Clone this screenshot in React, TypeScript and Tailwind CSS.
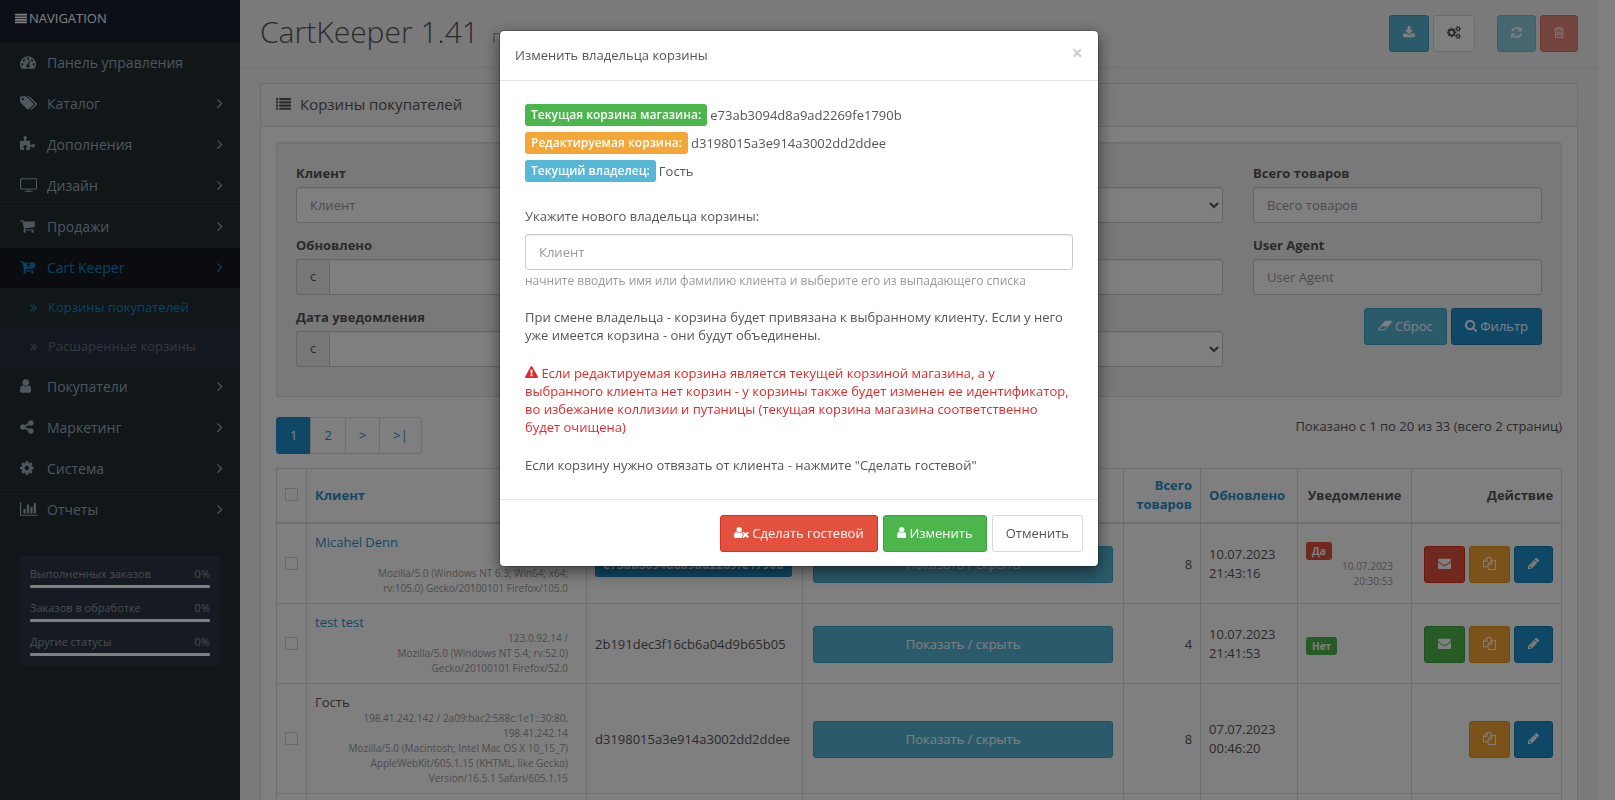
import React from "react";

type Glyph = { w: number; d: string };

const GEAR_SMALL =
  "v140q0 16-149 31-12 27-30 52 51 113 51 138 0 4-4 7-122 71-124 71-8 0-46-47t-52-68q-20 2-30 2t-30-2q-14 21-52 68t-46 47q-2 0-124-71-4-3-4-7 0-25 51-138-18-25-30-52-149-15-149-31v-140q0-16 149-31 13-29 30-52-51-113-51-138 0-4 4-7 4-2 35-20t59-34 30-16q8 0 46 46.5t52 67.5q20-2 30-2t30 2q51-71 92-112l6-2q4 0 124 70 4 3 4 7 0 25-51 138 17 23 30 52 149 15 149 31z";
const CART_BODY =
  "M640 1536q0 52-38 90t-90 38-90-38-38-90 38-90 90-38 90 38 38 90zm896 0q0 52-38 90t-90 38-90-38-38-90 38-90 90-38 90 38 38 90zm128-1088v512q0 24-16.5 42.5t-40.5 21.5l-1044 122q13 60 13 70 0 16-24 64h920q26 0 45 19t19 45-19 45-45 19h-1024q-26 0-45-19t-19-45q0-11 8-31.5t16-36 21.5-40 15.5-29.5l-177-823h-204q-26 0-45-19t-19-45 19-45 45-19h256q16 0 28.5 6.5t19.5 15.5 13 24.5 8 26 5.5 29.5 4.5 26h1201q26 0 45 19t19 45z";
const ROW_LINE = "v128q0 26-19 45t-45 19h-1664q-26 0-45-19t-19-45v-128q0-26 19-45t45-19h1664q26 0 45 19t19 45z";
const LIST_DOT = "v192q0 13-9.5 22.5t-22.5 9.5h-192q-13 0-22.5-9.5t-9.5-22.5v-192q0-13 9.5-22.5t22.5-9.5h192q13 0 22.5 9.5t9.5 22.5z";
const LIST_BAR = "v192q0 13-9.5 22.5t-22.5 9.5h-1344q-13 0-22.5-9.5t-9.5-22.5v-192q0-13 9.5-22.5t22.5-9.5h1344q13 0 22.5 9.5t9.5 22.5z";
const TRASH_SLOT = "v576q0 14-9 23t-23 9h-64q-14 0-23-9t-9-23v-576q0-14 9-23t23-9h64q14 0 23 9t9 23z";
const ANGLE =
  "q0 13-10 23l-466 466q-10 10-23 10t-23-10l-50-50q-10-10-10-23t10-23l393-393-393-393q-10-10-10-23t10-23l50-50q10-10 23-10t23 10l466 466q10 10 10 23z";

const glyphs = {
  justify: { w: 1792, d: `M1792 1344${ROW_LINE}M1792 960${ROW_LINE}M1792 576${ROW_LINE}M1792 192${ROW_LINE}` },
  list: {
    w: 1792,
    d: `M256 1312${LIST_DOT}M256 928${LIST_DOT}M256 544${LIST_DOT}M256 160${LIST_DOT}M1792 1312${LIST_BAR}M1792 928${LIST_BAR}M1792 544${LIST_BAR}M1792 160${LIST_BAR}`,
  },
  dashboard: {
    w: 1792,
    d: "M384 1152q0-53-37.5-90.5t-90.5-37.5-90.5 37.5-37.5 90.5 37.5 90.5 90.5 37.5 90.5-37.5 37.5-90.5zm192-448q0-53-37.5-90.5t-90.5-37.5-90.5 37.5-37.5 90.5 37.5 90.5 90.5 37.5 90.5-37.5 37.5-90.5zm428 481l101-382q6-26-7.5-48.5t-38.5-29.5-48 6.5-30 39.5l-101 382q-60 5-107 43.5t-63 98.5q-20 77 20 146t117 89 146-20 89-117q16-60-6-117t-72-91zm660-33q0-53-37.5-90.5t-90.5-37.5-90.5 37.5-37.5 90.5 37.5 90.5 90.5 37.5 90.5-37.5 37.5-90.5zm-640-640q0-53-37.5-90.5t-90.5-37.5-90.5 37.5-37.5 90.5 37.5 90.5 90.5 37.5 90.5-37.5 37.5-90.5zm448 192q0-53-37.5-90.5t-90.5-37.5-90.5 37.5-37.5 90.5 37.5 90.5 90.5 37.5 90.5-37.5 37.5-90.5zm320 448q0 261-141 483-19 29-54 29h-1402q-35 0-54-29-141-221-141-483 0-182 71-348t191-286 286-191 348-71 348 71 286 191 191 286 71 348z",
  },
  tags: {
    w: 1920,
    d: "M448 448q0-53-37.5-90.5t-90.5-37.5-90.5 37.5-37.5 90.5 37.5 90.5 90.5 37.5 90.5-37.5 37.5-90.5zm1067 576q0 53-37 90l-491 492q-39 37-91 37-53 0-90-37l-715-716q-38-37-64.5-101t-26.5-117v-416q0-52 38-90t90-38h416q53 0 117 26.5t102 64.5l715 714q37 39 37 91zm384 0q0 53-37 90l-491 492q-39 37-91 37-36 0-59-14t-53-45l470-470q37-37 37-90 0-52-37-91l-715-714q-38-38-102-64.5t-117-26.5h224q53 0 117 26.5t102 64.5l715 714q37 39 37 91z",
  },
  puzzle: {
    w: 1664,
    d: "M1664 1098q0 81-44.5 135t-123.5 54q-41 0-77.5-17.5t-59-38-56.5-38-71-17.5q-110 0-110 124 0 39 16 115t15 115v5q-22 0-33 1-34 3-97.5 11.5t-115.5 13.5-98 5q-61 0-103-26.5t-42-83.5q0-37 17.5-71t38-56.5 38-59 17.5-77.5q0-79-54-123.5t-135-44.5q-84 0-143 45.5t-59 127.5q0 43 15 83t33.5 64.5 33.5 53 15 50.5q0 45-46 89-37 35-117 35-95 0-245-24-9-2-27.5-4t-27.5-4l-13-2q-1 0-3-1-2 0-2-1v-1024q2 1 17.5 3.5t34 5 21.5 3.5q150 24 245 24 80 0 117-35 46-44 46-89 0-22-15-50.5t-33.5-53-33.5-64.5-15-83q0-82 59-127.5t144-45.5q80 0 134 44.5t54 123.5q0 41-17.5 77.5t-38 59-38 56.5-17.5 71q0 57 42 83.5t103 26.5q64 0 180-15t163-17v2q-1 2-3.5 17.5t-5 34-3.5 21.5q-24 150-24 245 0 80 35 117 44 46 89 46 22 0 50.5-15t53-33.5 64.5-33.5 83-15q82 0 127.5 59t45.5 143z",
  },
  tv: {
    w: 1920,
    d: "M1792 1248v-960q0-13-9.5-22.5t-22.5-9.5h-1600q-13 0-22.5 9.5t-9.5 22.5v960q0 13 9.5 22.5t22.5 9.5h1600q13 0 22.5-9.5t9.5-22.5zm128-960v960q0 66-47 113t-113 47h-736v128h352q14 0 23 9t9 23v64q0 14-9 23t-23 9h-832q-14 0-23-9t-9-23v-64q0-14 9-23t23-9h352v-128h-736q-66 0-113-47t-47-113v-960q0-66 47-113t113-47h1600q66 0 113 47t47 113z",
  },
  cart: { w: 1664, d: CART_BODY },
  cartPlus: {
    w: 1664,
    d:
      "M1216 640q0-26-19-45t-45-19h-128v-128q0-26-19-45t-45-19-45 19-19 45v128h-128q-26 0-45 19t-19 45 19 45 45 19h128v128q0 26 19 45t45 19 45-19 19-45v-128h128q26 0 45-19t19-45z" +
      CART_BODY,
  },
  user: {
    w: 1280,
    d: "M1280 1399q0 109-62.5 187t-150.5 78h-854q-88 0-150.5-78t-62.5-187q0-85 8.5-160.5t31.5-152 58.5-131 94-89 134.5-34.5q131 128 313 128t313-128q76 0 134.5 34.5t94 89 58.5 131 31.5 152 8.5 160.5zm-256-887q0 159-112.5 271.5t-271.5 112.5-271.5-112.5-112.5-271.5 112.5-271.5 271.5-112.5 271.5 112.5 112.5 271.5z",
  },
  share: {
    w: 1536,
    d: "M1216 1024q133 0 226.5 93.5t93.5 226.5-93.5 226.5-226.5 93.5-226.5-93.5-93.5-226.5q0-12 2-34l-360-180q-92 86-218 86-133 0-226.5-93.5t-93.5-226.5 93.5-226.5 226.5-93.5q126 0 218 86l360-180q-2-22-2-34 0-133 93.5-226.5t226.5-93.5 226.5 93.5 93.5 226.5-93.5 226.5-226.5 93.5q-126 0-218-86l-360 180q2 22 2 34t-2 34l360 180q92-86 218-86z",
  },
  cog: {
    w: 1536,
    d: "M1024 896q0-106-75-181t-181-75-181 75-75 181 75 181 181 75 181-75 75-181zm512-109v222q0 12-8 23t-20 13l-185 28q-19 54-39 91 35 50 107 138 10 12 10 25t-9 23q-27 37-99 108t-94 71q-12 0-26-9l-138-108q-44 23-91 38-16 136-29 186-7 28-36 28h-222q-14 0-24.5-8.5t-11.5-21.5l-28-184q-49-16-90-37l-141 107q-10 9-25 9-14 0-25-11-126-114-165-168-7-10-7-23 0-12 8-23 15-21 51-66.5t54-70.5q-27-50-41-99l-183-27q-13-2-21-12.5t-8-23.5v-222q0-12 8-23t19-13l186-28q14-46 39-92-40-57-107-138-10-12-10-24 0-10 9-23 26-36 98.5-107.5t94.5-71.5q13 0 26 10l138 107q44-23 91-38 16-136 29-186 7-28 36-28h222q14 0 24.5 8.5t11.5 21.5l28 184q49 16 90 37l142-107q9-9 24-9 13 0 25 10 129 119 165 170 7 8 7 22 0 12-8 23-15 21-51 66.5t-54 70.5q26 50 41 98l183 28q13 2 21 12.5t8 23.5z",
  },
  cogs: {
    w: 1920,
    d:
      "M896 896q0-106-75-181t-181-75-181 75-75 181 75 181 181 75 181-75 75-181zm768 512q0-52-38-90t-90-38-90 38-38 90q0 53 37.5 90.5t90.5 37.5 90.5-37.5 37.5-90.5zm0-1024q0-52-38-90t-90-38-90 38-38 90q0 53 37.5 90.5t90.5 37.5 90.5-37.5 37.5-90.5zm-384 421v185q0 10-7 19.5t-16 10.5l-155 24q-11 35-32 76 34 48 90 115 7 11 7 20 0 12-7 19-23 30-82.5 89.5t-78.5 59.5q-11 0-21-7l-115-90q-37 19-77 31-11 108-23 155-7 24-30 24h-186q-11 0-20-7.5t-10-17.5l-23-153q-34-10-75-31l-118 89q-7 7-20 7-11 0-21-8-144-133-144-160 0-9 7-19 10-14 41-53t47-61q-23-44-35-82l-152-24q-10-1-17-9.5t-7-19.5v-185q0-10 7-19.5t16-10.5l155-24q11-35 32-76-34-48-90-115-7-11-7-20 0-12 7-20 22-30 82-89t79-59q11 0 21 7l115 90q34-18 77-32 11-108 23-154 7-24 30-24h186q11 0 20 7.5t10 17.5l23 153q34 10 75 31l118-89q8-7 20-7 11 0 21 8 144 133 144 160 0 8-7 19-12 16-42 54t-45 60q23 48 34 82l152 23q10 2 17 10.5t7 19.5z" +
      "M1920 1338" + GEAR_SMALL + "M1920 314" + GEAR_SMALL,
  },
  chart: {
    w: 2048,
    d: "M640 896v512h-256v-512h256zm384-512v1024h-256v-1024h256zm1024 1152v128h-2048v-1536h128v1408h1920zm-640-896v768h-256v-768h256zm384-384v1152h-256v-1152h256z",
  },
  angle: { w: 640, d: `M595 960${ANGLE}` },
  angles: { w: 1024, d: `M595 960${ANGLE}M979 960${ANGLE}` },
  download: {
    w: 1664,
    d: "M1280 1344q0-26-19-45t-45-19-45 19-19 45 19 45 45 19 45-19 19-45zm256 0q0-26-19-45t-45-19-45 19-19 45 19 45 45 19 45-19 19-45zm128-224v320q0 40-28 68t-68 28h-1472q-40 0-68-28t-28-68v-320q0-40 28-68t68-28h465l135 136q58 56 136 56t136-56l136-136h464q40 0 68 28t28 68zm-325-569q17 41-14 70l-448 448q-18 19-45 19t-45-19l-448-448q-31-29-14-70 17-39 59-39h256v-448q0-26 19-45t45-19h256q26 0 45 19t19 45v448h256q42 0 59 39z",
  },
  refresh: {
    w: 1536,
    d: "M1511 1056q0 5-1 7-64 268-268 434.5t-478 166.5q-146 0-282.5-55t-243.5-157l-129 129q-19 19-45 19t-45-19-19-45v-448q0-26 19-45t45-19h448q26 0 45 19t19 45-19 45l-137 137q71 66 161 102t187 36q134 0 250-65t186-179q11-17 53-117 8-23 30-23h192q13 0 22.5 9.5t9.5 22.5zm25-800v448q0 26-19 45t-45 19h-448q-26 0-45-19t-19-45 19-45l138-138q-148-137-349-137-134 0-250 65t-186 179q-11 17-53 117-8 23-30 23h-199q-13 0-22.5-9.5t-9.5-22.5v-7q65-268 270-434.5t480-166.5q146 0 284 55.5t245 156.5l130-129q19-19 45-19t45 19 19 45z",
  },
  trash: {
    w: 1408,
    d: `M512 736${TRASH_SLOT}M768 736${TRASH_SLOT}M1024 736${TRASH_SLOT}M1152 1460v-948h-896v948q0 22 7 40.5t14.5 27 10.5 8.5h832q3 0 10.5-8.5t14.5-27 7-40.5zm-672-1076h448l-48-117q-7-9-17-11h-317q-10 2-17 11zm928 32v64q0 14-9 23t-23 9h-96v948q0 83-47 143.5t-113 60.5h-832q-66 0-113-58.5t-47-141.5v-952h-96q-14 0-23-9t-9-23v-64q0-14 9-23t23-9h309l70-167q15-37 54-63t79-26h320q40 0 79 26t54 63l70 167h309q14 0 23 9t9 23z`,
  },
  eraser: {
    w: 1920,
    d: "M896 1408l336-384h-768l-336 384h768zm1013-1077q15 34 9.5 71.5t-30.5 65.5l-896 1024q-38 44-96 44h-768q-38 0-69.5-20.5t-47.5-54.5q-15-34-9.5-71.5t30.5-65.5l896-1024q38-44 96-44h768q38 0 69.5 20.5t47.5 54.5z",
  },
  search: {
    w: 1664,
    d: "M1152 832q0-185-131.5-316.5t-316.5-131.5-316.5 131.5-131.5 316.5 131.5 316.5 316.5 131.5 316.5-131.5 131.5-316.5zm512 832q0 52-38 90t-90 38q-54 0-90-38l-343-342q-179 124-399 124-143 0-273.5-55.5t-225-150-150-225-55.5-273.5 55.5-273.5 150-225 225-150 273.5-55.5 273.5 55.5 225 150 150 225 55.5 273.5q0 220-124 399l343 343q37 37 37 90z",
  },
  mail: {
    w: 1792,
    d: "M1792 710v794q0 66-47 113t-113 47h-1472q-66 0-113-47t-47-113v-794q44 49 101 87 362 246 497 345 57 42 92.5 65.5t94.5 48 110 24.5h2q51 0 110-24.5t94.5-48 92.5-65.5q170-123 498-345 57-39 100-87zm0-294q0 79-49 151t-122 123q-376 261-468 325-10 7-42.5 30.5t-54 38-52 32.5-57.5 27-50 9h-2q-23 0-50-9t-57.5-27-52-32.5-54-38-42.5-30.5q-91-64-262-182.5t-205-142.5q-62-42-117-115.5t-55-136.5q0-78 41.5-130t118.5-52h1472q65 0 112.5 47t47.5 113z",
  },
  copy: {
    w: 1792,
    d: "M1696 384q40 0 68 28t28 68v1216q0 40-28 68t-68 28h-960q-40 0-68-28t-28-68v-288h-544q-40 0-68-28t-28-68v-672q0-40 20-88t48-76l408-408q28-28 76-48t88-20h416q40 0 68 28t28 68v328q68-40 128-40h416zm-544 213l-299 299h299v-299zm-640-384l-299 299h299v-299zm196 647l316-316v-416h-384v416q0 40-28 68t-68 28h-416v640h512v-256q0-40 20-88t48-76zm956 804v-1152h-384v416q0 40-28 68t-68 28h-416v640h896z",
  },
  pencil: {
    w: 1536,
    d: "M363 1536l91-91-235-235-91 91v107h128v128h107zm523-928q0-22-22-22-10 0-17 7l-542 542q-7 7-7 17 0 22 22 22 10 0 17-7l542-542q7-7 7-17zm-54-192l416 416-832 832h-416v-416zm683 96q0 53-37 90l-166 166-416-416 166-165q36-38 90-38 53 0 91 38l235 234q37 39 37 91z",
  },
  userTimes: {
    w: 2048,
    d: "M704 896q-159 0-271.5-112.5t-112.5-271.5 112.5-271.5 271.5-112.5 271.5 112.5 112.5 271.5-112.5 271.5-271.5 112.5zm1077 320l249 249q9 9 9 23 0 13-9 22l-136 136q-9 9-22 9-14 0-23-9l-249-249-249 249q-9 9-23 9-13 0-22-9l-136-136q-9-9-9-22 0-14 9-23l249-249-249-249q-9-9-9-23 0-13 9-22l136-136q9-9 22-9 14 0 23 9l249 249 249-249q9-9 23-9 13 0 22 9l136 136q9 9 9 22 0 14-9 23zm-498 0l-181 181q-37 37-37 91 0 53 37 90l83 83q-21 3-44 3h-874q-121 0-194-69t-73-190q0-53 3.5-103.5t14-109 26.5-108.5 43-97.5 62-81 85.5-53.5 111.5-20q19 0 39 17 154 122 319 122t319-122q20-17 39-17 28 0 57 6-28 27-41 50t-13 56q0 54 37 91z",
  },
  warning: {
    w: 1792,
    d: "M1024 1375v-190q0-14-9.5-23.5t-22.5-9.5h-192q-13 0-22.5 9.5t-9.5 23.5v190q0 14 9.5 23.5t22.5 9.5h192q13 0 22.5-9.5t9.5-23.5zm-2-374l18-459q0-12-10-19-13-11-24-11h-220q-11 0-24 11-10 7-10 21l17 457q0 10 10 16.5t24 6.5h185q14 0 23.5-6.5t10.5-16.5zm-14-934l768 1408q35 63-2 126-17 29-46.5 46t-63.5 17h-1536q-34 0-63.5-17t-46.5-46q-37-63-2-126l768-1408q17-31 47-49t65-18 65 18 47 49z",
  },
} satisfies Record<string, Glyph>;

type IconName = keyof typeof glyphs;

function Icon({ name, className = "" }: { name: IconName; className?: string }) {
  const g = glyphs[name];
  return (
    <svg
      aria-hidden="true"
      viewBox={`0 0 ${g.w} 1792`}
      style={{ width: `${g.w / 1792}em` }}
      className={`inline-block h-[1em] shrink-0 fill-current align-[-1px] ${className}`}
    >
      <path fillRule="evenodd" d={g.d} />
    </svg>
  );
}

const tones = {
  primary: "bg-[#1e91cf] border-[#197bb0] text-white",
  info: "bg-[#56b7d6] border-[#35a5c7] text-white",
  success: "bg-[#4cb64c] border-[#3da23d] text-white",
  warning: "bg-[#f4a737] border-[#e8940f] text-white",
  danger: "bg-[#e3503e] border-[#dd2f1a] text-white",
  plain: "bg-white border-[#d9d9d9] text-[#555]",
};
type Tone = keyof typeof tones;

function Button({
  tone,
  className = "",
  children,
  ...rest
}: { tone: Tone } & React.ButtonHTMLAttributes<HTMLButtonElement>) {
  return (
    <button
      type="button"
      className={`rounded-[3px] border px-[13px] py-2 text-[13px] leading-[19px] whitespace-nowrap ${tones[tone]} ${className}`}
      {...rest}
    >
      {children}
    </button>
  );
}

const menu: { icon: IconName; text: string; leaf?: boolean; open?: boolean }[] = [
  { icon: "dashboard", text: "Панель управления", leaf: true },
  { icon: "tags", text: "Каталог" },
  { icon: "puzzle", text: "Дополнения" },
  { icon: "tv", text: "Дизайн" },
  { icon: "cart", text: "Продажи" },
  { icon: "cartPlus", text: "Cart Keeper", open: true },
  { icon: "user", text: "Покупатели" },
  { icon: "share", text: "Маркетинг" },
  { icon: "cog", text: "Система" },
  { icon: "chart", text: "Отчеты" },
];

function Sidebar() {
  return (
    <nav className="w-60 shrink-0 bg-[#222d33]">
      <div className="flex h-[43px] items-start bg-[#191e2c] px-[15px] pt-[9px] text-[13px] leading-[19px] text-white">
        <span className="flex items-center gap-[2px]">
          <Icon name="justify" className="text-[12px]" />
          NAVIGATION
        </span>
      </div>
      <ul>
        {menu.map((m) => (
          <li key={m.text}>
            <a
              href="#"
              className={`flex h-[41px] items-center border-b border-[#283338] pr-[17px] pb-[2px] pl-5 text-[14px] ${
                m.open ? "bg-[#161820] text-[#0f86c4]" : "text-[#9baebc]"
              }`}
            >
              <span className="flex w-[27px]">
                <Icon name={m.icon} className="text-[16px]" />
              </span>
              <span className="grow">{m.text}</span>
              {!m.leaf && <Icon name="angle" className="text-[16px]" />}
            </a>
            {m.open && (
              <ul className="text-[13px]">
                <li>
                  <a href="#" className="flex h-[39px] items-center pb-[2px] pl-[30px] text-[#0f86c4]">
                    <span className="flex w-[18px]">
                      <Icon name="angles" className="text-[13px]" />
                    </span>
                    Корзины покупателей
                  </a>
                </li>
                <li>
                  <a href="#" className="flex h-[39px] items-center bg-[#262e40] pb-[2px] pl-[30px] text-[#6a6f7c]">
                    <span className="flex w-[18px]">
                      <Icon name="angles" className="text-[13px]" />
                    </span>
                    Расшаренные корзины
                  </a>
                </li>
              </ul>
            )}
          </li>
        ))}
      </ul>
      <div className="mx-5 mt-[25px] flex flex-col gap-3 rounded-[2px] bg-[#2a3546] px-[10px] pt-[9px] pb-[11px] text-[11px] leading-[17px] text-[#999]">
        {["Выполненных заказов", "Заказов в обработке", "Другие статусы"].map((s) => (
          <div key={s}>
            <div className="flex justify-between">
              <span>{s}</span>
              <span>0%</span>
            </div>
            <div className="mt-[3px] -mb-px h-[3px] rounded-[1px] bg-white" />
          </div>
        ))}
      </div>
    </nav>
  );
}

const box =
  "h-9 w-full min-w-0 rounded-[3px] border border-[#ccc] bg-white px-[13px] text-[13px] text-[#555] placeholder:text-[#999] shadow-[inset_0_1px_1px_rgba(0,0,0,0.075)]";

function Field({ id, label, children }: { id: string; label: string; children: React.ReactNode }) {
  return (
    <div>
      <label htmlFor={id} className="mb-[4px] block leading-[19px] font-bold text-[#555]">
        {label}
      </label>
      {children}
    </div>
  );
}

function DateInput({ id, prefix }: { id: string; prefix: string }) {
  return (
    <div className="flex">
      <span className="flex h-9 items-center rounded-l-[3px] border border-r-0 border-[#ccc] bg-[#eee] px-[13px] text-[#555]">
        {prefix}
      </span>
      <input id={id} className={`${box} rounded-l-none`} />
    </div>
  );
}

function Filters() {
  return (
    <form className="grid grid-cols-4 gap-x-[30px] rounded-[3px] border border-[#dedede] bg-[#f3f3f3] px-[19px] pt-[21px] pb-[29px] shadow-[inset_0_1px_1px_rgba(0,0,0,0.05)]">
      <div className="flex flex-col gap-[13px]">
        <Field id="client" label="Клиент">
          <input id="client" placeholder="Клиент" className={box} />
        </Field>
        <Field id="updated-from" label="Обновлено">
          <DateInput id="updated-from" prefix="с" />
        </Field>
        <Field id="notified-from" label="Дата уведомления">
          <DateInput id="notified-from" prefix="с" />
        </Field>
      </div>
      <div className="flex flex-col gap-[13px]">
        <Field id="cart" label="Корзина">
          <input id="cart" placeholder="Корзина" className={box} />
        </Field>
        <Field id="updated-to" label="Обновлено">
          <DateInput id="updated-to" prefix="по" />
        </Field>
        <Field id="notified-to" label="Дата уведомления">
          <DateInput id="notified-to" prefix="по" />
        </Field>
      </div>
      <div className="flex flex-col gap-[13px]">
        <Field id="kind" label="Тип">
          <select id="kind" className={box} />
        </Field>
        <Field id="ip" label="IP">
          <input id="ip" placeholder="IP" className={box} />
        </Field>
        <Field id="notice" label="Уведомление">
          <select id="notice" className={box} />
        </Field>
      </div>
      <div className="flex flex-col gap-[13px]">
        <Field id="total" label="Всего товаров">
          <input id="total" placeholder="Всего товаров" className={box} />
        </Field>
        <Field id="agent" label="User Agent">
          <input id="agent" placeholder="User Agent" className={box} />
        </Field>
        <div className="flex justify-end gap-1">
          <Button tone="info">
            <Icon name="eraser" /> Сброс
          </Button>
          <Button tone="primary">
            <Icon name="search" /> Фильтр
          </Button>
        </div>
      </div>
    </form>
  );
}

type Row = {
  name: string;
  guest?: boolean;
  agent: string[];
  cart: string;
  current?: boolean;
  total: number;
  date: string[];
  notice?: { text: string; tone: Tone; when?: string[] };
  mail?: Tone;
};

const rows: Row[] = [
  {
    name: "Micahel Denn",
    agent: ["\u00a0", "Mozilla/5.0 (Windows NT 6.3; Win64; x64;", "rv:105.0) Gecko/20100101 Firefox/105.0"],
    cart: "e73ab3094d8a9ad2269fe1790b",
    current: true,
    total: 8,
    date: ["10.07.2023", "21:43:16"],
    notice: { text: "Да", tone: "danger", when: ["10.07.2023", "20:30:53"] },
    mail: "danger",
  },
  {
    name: "test test",
    agent: ["123.0.92.14 /", "Mozilla/5.0 (Windows NT 5.4; rv:52.0)", "Gecko/20100101 Firefox/52.0"],
    cart: "2b191dec3f16cb6a04d9b65b05",
    total: 4,
    date: ["10.07.2023", "21:41:53"],
    notice: { text: "Нет", tone: "success" },
    mail: "success",
  },
  {
    name: "Гость",
    guest: true,
    agent: [
      "198.41.242.142 / 2a09:bac2:588c:1e1::30:80,",
      "198.41.242.14",
      "Mozilla/5.0 (Macintosh; Intel Mac OS X 10_15_7)",
      "AppleWebKit/605.1.15 (KHTML, like Gecko)",
      "Version/16.5.1 Safari/605.1.15",
    ],
    cart: "d3198015a3e914a3002dd2ddee",
    total: 8,
    date: ["07.07.2023", "00:46:20"],
  },
];

function Tick({ label }: { label: string }) {
  return (
    <input
      type="checkbox"
      aria-label={label}
      className="mb-[2px] block size-[13px] appearance-none border border-[#d4d4d4]"
    />
  );
}

function Lines({ items }: { items: string[] }) {
  return (
    <>
      {items.map((t, i) => (
        <span key={i} className="block whitespace-nowrap">
          {t}
        </span>
      ))}
    </>
  );
}

const cell = "border border-[#ddd] align-middle";
const td = `${cell} px-2 pt-[9px] pb-[7px]`;
const th = `${cell} border-b-2 px-2 pt-[7px] pb-2 leading-[19px] font-bold`;

function CartTable() {
  return (
    <table className="w-full table-fixed border-collapse text-[13px]">
      <colgroup>
        <col className="w-[30px]" />
        <col className="w-[280px]" />
        <col className="w-[216px]" />
        <col />
        <col className="w-[77px]" />
        <col className="w-[97px]" />
        <col className="w-[114px]" />
        <col className="w-[150px]" />
      </colgroup>
      <thead>
        <tr>
          <th className={th}>
            <Tick label="Выбрать все" />
          </th>
          <th className={`${th} text-left`}>
            <a href="#" className="text-[#1e91cf]">Клиент</a>
          </th>
          <th className={`${th} text-left`}>
            <a href="#" className="text-[#1e91cf]">Корзина</a>
          </th>
          <th className={`${th} text-center`}>Товары</th>
          <th className={`${th} text-right`}>
            <a href="#" className="text-[#1e91cf]">Всего товаров</a>
          </th>
          <th className={`${th} text-left`}>
            <a href="#" className="text-[#1e91cf]">Обновлено</a>
          </th>
          <th className={`${th} text-center`}>Уведомление</th>
          <th className={`${th} text-right`}>Действие</th>
        </tr>
      </thead>
      <tbody>
        {rows.map((r) => (
          <tr key={r.cart}>
            <td className={td}>
              <Tick label={r.name} />
            </td>
            <td className={td}>
              <div className="leading-[18px]">{r.guest ? r.name : <a href="#" className="text-[#1e91cf]">{r.name}</a>}</div>
              <div className="pr-[10px] text-right text-[10px] leading-[15px] text-[#999]">
                <Lines items={r.agent} />
              </div>
            </td>
            <td className={td}>
              {r.current ? (
                <span className="inline-block rounded-[3px] bg-[#1e91cf] px-2 text-[12px] leading-[24px] font-bold text-white">
                  {r.cart}
                </span>
              ) : (
                r.cart
              )}
            </td>
            <td className={`${cell} px-[10px] pt-[9px] pb-[7px]`}>
              <Button tone="info" className="block w-full">
                Показать / скрыть
              </Button>
            </td>
            <td className={`${td} text-right`}>{r.total}</td>
            <td className={`${cell} px-2 py-2 leading-[19px]`}>
              <Lines items={r.date} />
            </td>
            <td className={`${cell} px-2 py-2`}>
              {r.notice && (
                <span
                  className={`mt-1 block w-fit rounded-[3px] px-[6px] text-[10px] leading-[18px] font-bold ${tones[r.notice.tone]}`}
                >
                  {r.notice.text}
                </span>
              )}
              {r.notice?.when && (
                <div className="-mt-px pr-[10px] text-right text-[10px] leading-[15px] text-[#999]">
                  <Lines items={r.notice.when} />
                </div>
              )}
            </td>
            <td className={td}>
              <div className="flex justify-end gap-1">
                {r.mail && (
                  <Button tone={r.mail} aria-label="Уведомить">
                    <Icon name="mail" />
                  </Button>
                )}
                <Button tone="warning" aria-label="Копировать">
                  <Icon name="copy" />
                </Button>
                <Button tone="primary" aria-label="Редактировать">
                  <Icon name="pencil" />
                </Button>
              </div>
            </td>
          </tr>
        ))}
        <tr>
          {Array.from({ length: 8 }, (_, i) => (
            <td key={i} className={`${td} h-20`} />
          ))}
        </tr>
      </tbody>
    </table>
  );
}

function Pager() {
  const item = "-ml-px border border-[#ddd] bg-white px-[13px] py-2 leading-[19px] text-[#1e91cf]";
  return (
    <div className="flex items-start justify-between">
      <div className="flex pl-px">
        <a href="#" className="-ml-px rounded-l-[3px] border border-[#1e91cf] bg-[#1e91cf] px-[13px] py-2 leading-[19px] text-white">
          1
        </a>
        <a href="#" className={item}>2</a>
        <a href="#" className={item}>&gt;</a>
        <a href="#" className={`${item} rounded-r-[3px]`}>&gt;|</a>
      </div>
      <span className="leading-[19px]">Показано с 1 по 20 из 33 (всего 2 страниц)</span>
    </div>
  );
}

function Info({ tone, label, value }: { tone: Tone; label: string; value: string }) {
  return (
    <div className="flex items-center gap-[3px]">
      <span className={`rounded-[3px] px-[6px] text-[12px] leading-[22px] font-semibold ${tones[tone]}`}>{label}</span>
      <span>{value}</span>
    </div>
  );
}

function OwnerDialog() {
  return (
    <div
      role="dialog"
      aria-labelledby="dialog-title"
      className="w-[600px] self-start rounded-[5px] border border-black/20 bg-white bg-clip-padding text-[13px] leading-[18px] text-[#555] shadow-[0_5px_15px_rgba(0,0,0,0.5)]"
    >
      <div className="flex items-start justify-between border-b border-[#e5e5e5] p-[15px]">
        <h4 id="dialog-title" className="leading-[19px]">
          Изменить владельца корзины
        </h4>
        <button type="button" aria-label="Закрыть" className="text-[20px] leading-[14px] font-bold text-[#ccc]">
          ×
        </button>
      </div>
      <div className="px-[25px] pt-[23px] pb-[25px]">
        <div className="flex flex-col gap-[6px]">
          <Info tone="success" label="Текущая корзина магазина:" value="e73ab3094d8a9ad2269fe1790b" />
          <Info tone="warning" label="Редактируемая корзина:" value="d3198015a3e914a3002dd2ddee" />
          <Info tone="info" label="Текущий владелец:" value="Гость" />
        </div>
        <label htmlFor="owner" className="mt-[25px] mb-[9px] block">
          Укажите нового владельца корзины:
        </label>
        <input id="owner" placeholder="Клиент" className={box} />
        <p className="mt-[2px] text-[12px] text-[#999]">
          начните вводить имя или фамилию клиента и выберите его из выпадающего списка
        </p>
        <p className="mt-[18px]">
          При смене владельца - корзина будет привязана к выбранному клиенту. Если у него уже имеется корзина - они
          будут объединены.
        </p>
        <p className="mt-5 text-[#e12a2a]">
          <Icon name="warning" /> Если редактируемая корзина является текущей корзиной магазина, а у выбранного клиента
          нет корзин - у корзины также будет изменен ее идентификатор, во избежание коллизии и путаницы (текущая
          корзина магазина соответственно будет очищена)
        </p>
        <p className="mt-5">Если корзину нужно отвязать от клиента - нажмите "Сделать гостевой"</p>
      </div>
      <div className="flex justify-end gap-[5px] border-t border-[#e5e5e5] px-[15px] pt-[15px] pb-[14px]">
        <Button tone="danger">
          <Icon name="userTimes" /> Сделать гостевой
        </Button>
        <Button tone="success">
          <Icon name="user" /> Изменить
        </Button>
        <Button tone="plain">Отменить</Button>
      </div>
    </div>
  );
}

export default function App() {
  return (
    <div className="flex h-screen overflow-hidden bg-white pr-[17px] font-['Open_Sans','Noto_Sans',sans-serif] text-[13px] text-[#555]">
      <Sidebar />
      <main className="min-w-0 grow bg-[#f5f5f5]">
        <header className="flex h-[68px] items-start justify-between border-b border-[#e5e5e5] px-5 pt-[15px]">
          <div className="flex items-start gap-[13px]">
            <h1 className="text-[30px] leading-[34px] font-light">CartKeeper 1.41</h1>
            <a href="#" className="flex items-center gap-[2px] pt-[13px] text-[14px] leading-[20px] text-[#999]">
              Поддержка
              <span className="size-[12px] rounded-full border-2 border-[#35a5c7]" />
            </a>
          </div>
          <div className="flex gap-1">
            <Button tone="info" aria-label="Скачать">
              <Icon name="download" />
            </Button>
            <Button tone="plain" aria-label="Настройки">
              <Icon name="cogs" />
            </Button>
            <Button tone="info" disabled aria-label="Обновить" className="ml-[18px] opacity-65">
              <Icon name="refresh" />
            </Button>
            <Button tone="danger" disabled aria-label="Удалить" className="opacity-65">
              <Icon name="trash" />
            </Button>
          </div>
        </header>
        <section className="mx-5 mt-[15px] border border-[#dcdcdc] bg-white">
          <h3 className="flex h-[43px] items-center gap-[9px] border-b border-[#dcdcdc] bg-[#f6f6f6] px-[15px] pb-[2px] text-[15px]">
            <Icon name="list" />
            Корзины покупателей
          </h3>
          <div className="flex flex-col px-[15px] pt-[15px]">
            <Filters />
            <div className="mt-5 mb-[14px]">
              <Pager />
            </div>
            <CartTable />
          </div>
        </section>
      </main>
      <div className="fixed inset-0 bg-black/50" />
      <div className="fixed inset-0 flex justify-center pt-[30px] pr-[17px]">
        <OwnerDialog />
      </div>
    </div>
  );
}
